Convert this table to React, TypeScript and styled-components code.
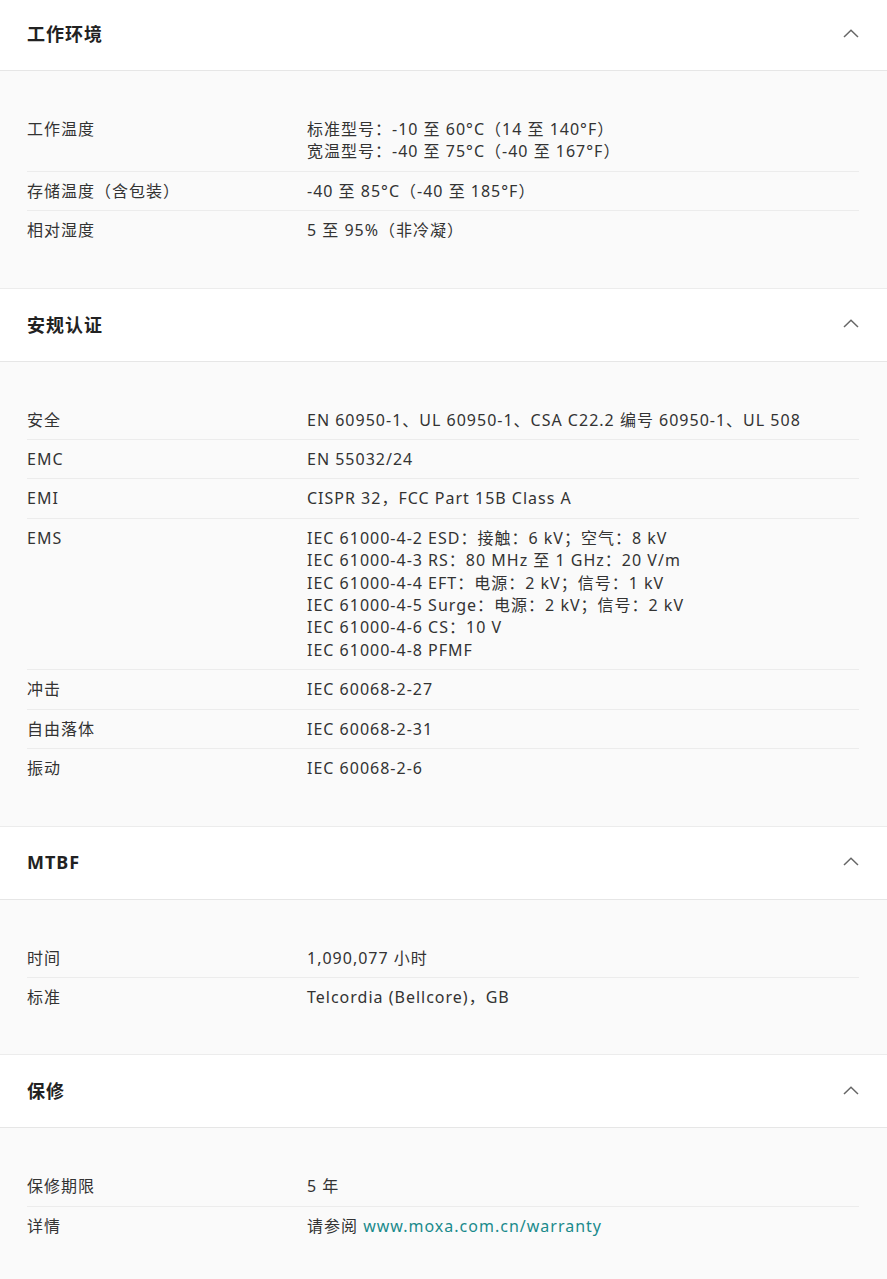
import React from "react";
import styled, { createGlobalStyle } from "styled-components";

const Global = createGlobalStyle`
  html, body { margin: 0; padding: 0; background: #fafafa; }
  body { font-family: "Noto Sans", "Noto Sans CJK SC", sans-serif; color: #333; }
  * { box-sizing: border-box; }
`;

const Page = styled.div`
  width: 887px;
  margin-top: -3px;
  display: flex;
  flex-direction: column;
`;

const Section = styled.section`
  display: flex;
  flex-direction: column;
`;

const Header = styled.div`
  height: 74px;
  background: #fff;
  display: flex;
  align-items: center;
  justify-content: space-between;
  padding: 0 28px 2px 27px;
  border-top: 1px solid #ececec;
  border-bottom: 1px solid #e6e6e6;
  box-shadow: 0 1px 1px rgba(0, 0, 0, 0.03);
`;

const Title = styled.h3`
  margin: 0;
  font-size: 18px;
  font-weight: 700;
  letter-spacing: 1px;
  color: #222;
  font-family: "Noto Sans", "Noto Sans CJK SC", sans-serif;
`;

const Body = styled.div`
  background: #fafafa;
  padding: 39px 28px 38px 27px;
  display: flex;
  flex-direction: column;
`;

const Row = styled.div`
  display: grid;
  grid-template-columns: 280px 1fr;
  padding: 8px 0;
  font-size: 16px;
  line-height: 22.4px;
  letter-spacing: 1px;
  border-top: 1px solid #ececec;
  &:first-child { border-top: none; }
`;

const Label = styled.div`
  color: #333;
`;

const Value = styled.div`
  color: #333;
  display: flex;
  flex-direction: column;
`;

const Link = styled.a`
  color: #1a8a8c;
  text-decoration: none;
`;

const Chevron = () => (
  <svg width="16" height="9" viewBox="0 0 16 9" fill="none">
    <path d="M1 8 L8 1.3 L15 8" stroke="#666" strokeWidth="1.5" />
  </svg>
);

type Item = { label: string; value: React.ReactNode[] };

const sections: { title: string; items: Item[] }[] = [
  {
    title: "工作环境",
    items: [
      { label: "工作温度", value: ["标准型号：-10 至 60°C（14 至 140°F）", "宽温型号：-40 至 75°C（-40 至 167°F）"] },
      { label: "存储温度（含包装）", value: ["-40 至 85°C（-40 至 185°F）"] },
      { label: "相对湿度", value: ["5 至 95%（非冷凝）"] },
    ],
  },
  {
    title: "安规认证",
    items: [
      { label: "安全", value: ["EN 60950-1、UL 60950-1、CSA C22.2 编号 60950-1、UL 508"] },
      { label: "EMC", value: ["EN 55032/24"] },
      { label: "EMI", value: ["CISPR 32，FCC Part 15B Class A"] },
      {
        label: "EMS",
        value: [
          "IEC 61000-4-2 ESD：接触：6 kV；空气：8 kV",
          "IEC 61000-4-3 RS：80 MHz 至 1 GHz：20 V/m",
          "IEC 61000-4-4 EFT：电源：2 kV；信号：1 kV",
          "IEC 61000-4-5 Surge：电源：2 kV；信号：2 kV",
          "IEC 61000-4-6 CS：10 V",
          "IEC 61000-4-8 PFMF",
        ],
      },
      { label: "冲击", value: ["IEC 60068-2-27"] },
      { label: "自由落体", value: ["IEC 60068-2-31"] },
      { label: "振动", value: ["IEC 60068-2-6"] },
    ],
  },
  {
    title: "MTBF",
    items: [
      { label: "时间", value: ["1,090,077 小时"] },
      { label: "标准", value: ["Telcordia (Bellcore)，GB"] },
    ],
  },
  {
    title: "保修",
    items: [
      { label: "保修期限", value: ["5 年"] },
      {
        label: "详情",
        value: [
          <span key="w">
            请参阅 <Link href="#">www.moxa.com.cn/warranty</Link>
          </span>,
        ],
      },
    ],
  },
];

export default function App() {
  return (
    <Page>
      <Global />
      {sections.map((s) => (
        <Section key={s.title}>
          <Header>
            <Title>{s.title}</Title>
            <Chevron />
          </Header>
          <Body>
            {s.items.map((it) => (
              <Row key={it.label}>
                <Label>{it.label}</Label>
                <Value>
                  {it.value.map((v, i) => (
                    <span key={i}>{v}</span>
                  ))}
                </Value>
              </Row>
            ))}
          </Body>
        </Section>
      ))}
    </Page>
  );
}
